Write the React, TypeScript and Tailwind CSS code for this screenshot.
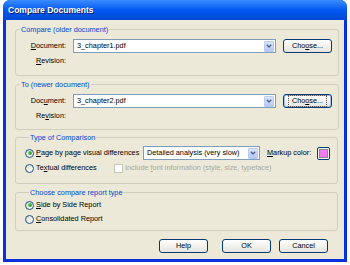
import type { ReactNode } from "react";

const Key = ({ children }: { children: ReactNode }) => <span className="underline underline-offset-[1px]">{children}</span>;

function Group({ title, className, children }: { title: string; className: string; children: ReactNode }) {
  return (
    <fieldset className={`rounded-[3px] border border-[#D0D0BF] ${className}`}>
      <legend className="ml-[4px] px-[1px] text-[7.3px] leading-[9px] text-[#0046D5]">{title}</legend>
      {children}
    </fieldset>
  );
}

function Button({ children, focused }: { children: ReactNode; focused?: boolean }) {
  return (
    <div
      className={`flex h-[14px] w-[49px] items-center justify-center rounded-[3px] border border-[#003C74] bg-gradient-to-b from-white to-[#E6E5DE] text-[7.3px] ${
        focused ? "shadow-[inset_0_0_0_1px_#A6BDF0]" : ""
      }`}
    >
      <span className={focused ? "outline outline-1 outline-dotted outline-[#555] px-[3px]" : ""}>{children}</span>
    </div>
  );
}

function Combo({ value, width }: { value: string; width: string }) {
  return (
    <div className={`flex h-[14px] shrink-0 items-center border border-[#7F9DB9] bg-white pl-[3px] pr-[1px] ${width}`}>
      <span className="flex-1 whitespace-nowrap text-[7.3px]">{value}</span>
      <div className="flex h-[11px] w-[10px] items-center justify-center rounded-[1px] border border-[#B9CBF3] bg-gradient-to-b from-[#D8E4FD] to-[#B3C8F5]">
        <svg width="6" height="4" viewBox="0 0 6 4">
          <path d="M0.8 0.8 L3 3 L5.2 0.8" fill="none" stroke="#4D6185" strokeWidth="1.3" />
        </svg>
      </div>
    </div>
  );
}

function Radio({ checked, label }: { checked?: boolean; label: ReactNode }) {
  return (
    <div className="flex items-center gap-[2px]">
      <div className="flex h-[9px] w-[9px] items-center justify-center rounded-full border border-[#1C5180] bg-gradient-to-br from-[#DCDBD3] to-white">
        {checked && <div className="h-[4px] w-[4px] rounded-full bg-gradient-to-br from-[#5ED35E] to-[#1E9A1E]" />}
      </div>
      <span className="whitespace-nowrap text-[7.3px]">{label}</span>
    </div>
  );
}

function DocRow({ docKey, value, revKey, focused }: { docKey: ReactNode; value: string; revKey: ReactNode; focused?: boolean }) {
  return (
    <div className="flex flex-col">
      <div className="flex items-center">
        <div className="w-[50px] text-right text-[7.3px]">{docKey}</div>
        <div className="ml-[7px]">
          <Combo value={value} width="w-[203px]" />
        </div>
        <div className="ml-[7px]">
          <Button focused={focused}>
            Cho<Key>o</Key>se...
          </Button>
        </div>
      </div>
      <div className="mt-[1px] flex h-[14px] items-center">
        <div className="w-[50px] text-right text-[7.3px]">{revKey}</div>
      </div>
    </div>
  );
}

export default function App() {
  return (
    <div className="h-[265px] w-[350px] bg-white font-['Liberation_Sans',Arial,sans-serif] text-black">
      <div className="ml-[3px] flex h-[262px] w-[344px] flex-col rounded-t-[7px] bg-[#0831D9] px-[3px] pb-[3px]">
        {/* title bar */}
        <div className="-mx-[3px] flex h-[20px] items-center rounded-t-[7px] bg-gradient-to-b from-[#3A8CFF] via-[#0058EE] to-[#0049D6] pl-[5px]">
          <span className="text-[8.5px] font-bold text-white [text-shadow:1px_1px_0_#0A1C6B]">Compare Documents</span>
        </div>

        {/* body */}
        <div className="flex flex-1 flex-col bg-[#ECE9D8] pl-[9px] pr-[6px] pt-[5px]">
          <Group title="Compare (older document)" className="h-[51px] pr-[6px] pt-[5px]">
            <DocRow docKey={<><Key>D</Key>ocument:</>} value="3_chapter1.pdf" revKey={<><Key>R</Key>evision:</>} />
          </Group>

          <Group title="To (newer document)" className="mt-[4px] h-[50px] pr-[6px] pt-[5px]">
            <DocRow
              docKey={<>Doc<Key>u</Key>ment:</>}
              value="3_chapter2.pdf"
              revKey={<>Re<Key>v</Key>ision:</>}
              focused
            />
          </Group>

          <Group title="Type of Comparison" className="mt-[3px] h-[51px] pl-[9px] pr-[4px] pt-[4px]">
            <div className="flex items-center">
              <div className="w-[118px] shrink-0">
                <Radio checked label={<><Key>P</Key>age by page visual differences</>} />
              </div>
              <Combo value="Detailed analysis (very slow)" width="w-[117px]" />
              <span className="ml-[7px] shrink-0 whitespace-nowrap text-[7.3px]">
                <Key>M</Key>arkup color:
              </span>
              <div className="ml-[6px] flex h-[13px] w-[13px] shrink-0 items-center justify-center rounded-[2px] border border-[#003C74] bg-[#F3F2EC]">
                <div className="h-[9px] w-[9px] border border-[#8C8C8C] bg-[#F07CF0]" />
              </div>
            </div>
            <div className="mt-[3px] flex items-center">
              <div className="w-[89px] shrink-0">
                <Radio label={<>Te<Key>x</Key>tual differences</>} />
              </div>
              <div className="flex items-center gap-[2px]">
                <div className="h-[9px] w-[9px] border border-[#C9C7BA] bg-white" />
                <span className="whitespace-nowrap text-[7.3px] text-[#ACA899]">
                  Include <Key>f</Key>ont information (style, size, typeface)
                </span>
              </div>
            </div>
          </Group>

          <Group title="Choose compare report type" className="mt-[4px] h-[43px] pl-[9px] pt-[3px]">
            <div className="flex flex-col gap-[3px]">
              <Radio checked label={<><Key>S</Key>ide by Side Report</>} />
              <Radio label={<><Key>C</Key>onsolidated Report</>} />
            </div>
          </Group>

          <div className="mt-[8px] flex justify-end pr-[10px]">
            <Button>Help</Button>
            <div className="ml-[14px]">
              <Button>OK</Button>
            </div>
            <div className="ml-[8px]">
              <Button>Cancel</Button>
            </div>
          </div>
        </div>
      </div>
    </div>
  );
}
